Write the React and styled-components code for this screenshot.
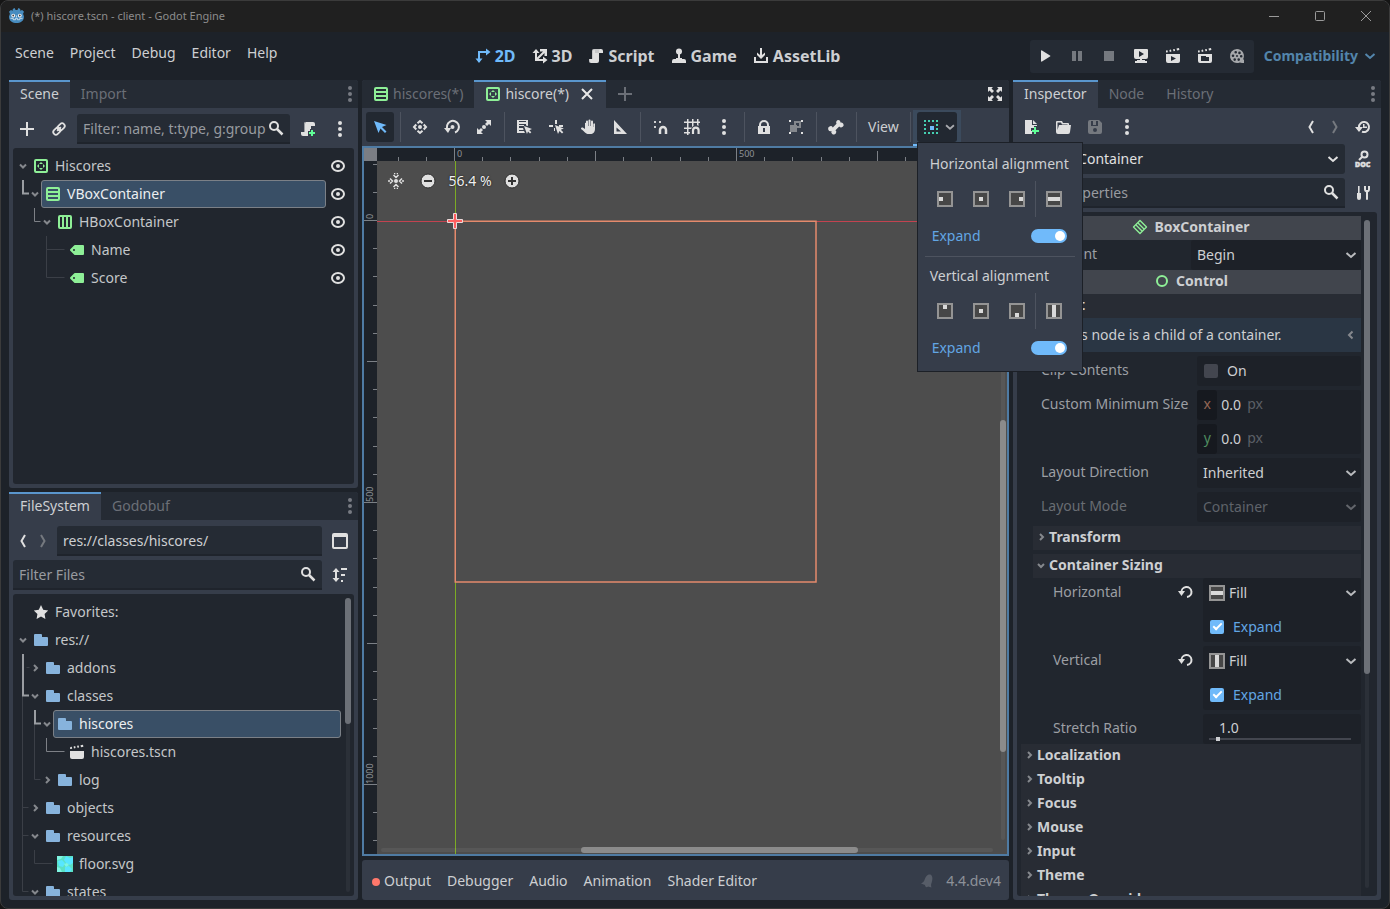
import React from 'react';
import styled, { createGlobalStyle, css } from 'styled-components';

const GlobalStyle = createGlobalStyle`
  *, *::before, *::after {
    box-sizing: border-box;
  }
  html, body, #root {
    height: 100%;
  }
  body {
    margin: 0;
    overflow: hidden;
    background: #151515;
    color: #cdcfd2;
    font: 14px/20px "Noto Sans", "Open Sans", sans-serif;
  }
  button, input, select {
    font: inherit;
    color: inherit;
    margin: 0;
  }
`;

/* ---------- icons ---------- */

const Svg = styled.svg`
  flex: none;
  display: block;
  fill: currentColor;
  overflow: visible;
`;

const box = 'M3 1a2 2 0 0 0-2 2v10a2 2 0 0 0 2 2h10a2 2 0 0 0 2-2V3a2 2 0 0 0-2-2z';
const line = { fill: 'none', stroke: 'currentColor', strokeWidth: 2 };

const icons = {
  dots: (
    <>
      <circle cx="8" cy="2" r="2" />
      <circle cx="8" cy="8" r="2" />
      <circle cx="8" cy="14" r="2" />
    </>
  ),
  add: <path d="M7 1h2v6h6v2H9v6H7V9H1V7h6z" />,
  link: (
    <g {...line} transform="rotate(-45 8 8)">
      <rect x="0" y="5" width="9" height="6" rx="3" />
      <rect x="7" y="5" width="9" height="6" rx="3" />
      <path d="M5 8h6" />
    </g>
  ),
  search: (
    <g {...line}>
      <circle cx="6" cy="6" r="4" />
      <path d="m9 9 5.500 5.500" strokeWidth="2.500" />
    </g>
  ),
  script: (
    <>
      <path d="M6 1a2 2 0 0 0-2 2v8H1v2a2 2 0 0 0 2 2h6a2 2 0 0 0 2-2V5h4V3a2 2 0 0 0-2-2z" />
      <path fill="#8b8e93" d="M6 1a2 2 0 0 0-2 2v8h1V3a1 1 0 0 1 2 0v2h4V3a2 2 0 0 1 1-1.700L12 1zM1 11v2a2 2 0 0 0 2 2 2 2 0 0 1-1-2v-2z" opacity=".3" />
    </>
  ),
  scriptAdd: (
    <>
      <path d="M6 1a2 2 0 0 0-2 2v8H1v2a2 2 0 0 0 2 2h5v-5h2V8h1V5h4V3a2 2 0 0 0-2-2z" />
      <path fill="#9b9ea2" d="M6 1a2 2 0 0 0-2 2v8h1V3a1 1 0 0 1 1-1z" />
      <path fill="#5fff97" d="M11 9h2v2h2v2h-2v2h-2v-2H9v-2h2z" />
    </>
  ),
  eye: (
    <>
      <ellipse cx="8" cy="8" rx="6" ry="5" {...line} />
      <circle cx="8" cy="8" r="2" />
    </>
  ),
  vbox: <path fillRule="evenodd" d={`${box}m0 2h10v2H3zm0 4h10v2H3zm0 4h10v2H3z`} />,
  hbox: <path fillRule="evenodd" d={`${box}m0 2h2v10H3zm4 0h2v10H7zm4 0h2v10h-2z`} />,
  center: (
    <>
      <path fillRule="evenodd" d={`${box}m0 2h10v10H3z`} />
      <path d="m8 4 2 2H6zM8 12l2-2H6zM4 8l2-2v4zM12 8l-2-2v4z" />
    </>
  ),
  label: (
    <path
      fillRule="evenodd"
      d="M6 3a1 1 0 0 0-.7.300l-4 4a1 1 0 0 0 0 1.400l4 4a1 1 0 0 0 .7.300h8a1 1 0 0 0 1-1V4a1 1 0 0 0-1-1zM5 7a1 1 0 0 1 0 2 1 1 0 0 1 0-2z"
    />
  ),
  back: <path d="M10 2 6.500 8l3.500 6" {...line} />,
  forward: <path d="m6 2 3.500 6L6 14" {...line} />,
  panel: <path fillRule="evenodd" d="M2 0a2 2 0 0 0-2 2v12a2 2 0 0 0 2 2h12a2 2 0 0 0 2-2V2a2 2 0 0 0-2-2zm0 4h12v10H2z" />,
  sort: (
    <>
      <path d="M4 1 .500 5H3v6H.500L4 15l3.500-4H5V5h2.500z" />
      <path d="M9 1h6v2H9zM9 7h4v2H9zM9 13h2v2H9z" />
    </>
  ),
  star: <path d="m8 1 2.200 4.700 5 .7-3.600 3.600.8 5L8 12.600 3.600 15l.8-5L.800 6.400l5-.7z" />,
  folder: <path d="M2 2a1 1 0 0 0-1 1v10a1 1 0 0 0 1 1h12a1 1 0 0 0 1-1V6a1 1 0 0 0-1-1H9V3a1 1 0 0 0-1-1z" />,
  clapper: (
    <>
      <path d="M1 7h14v6a2 2 0 0 1-2 2H3a2 2 0 0 1-2-2z" />
      <path d="m1 5 .300-2 1.500-.3.400 2zM5 4.400 4.600 2.400l1.600-.3.400 2zM8.500 3.700 8 1.800l1.700-.3.400 2zM12 3.200l-.5-2 2.500-.5.400 2z" />
    </>
  ),
  clapperPlay: (
    <>
      <path fillRule="evenodd" d="M1 6h14v7a2 2 0 0 1-2 2H3a2 2 0 0 1-2-2zm5 2v5l5-2.500z" />
      <path d="m1 4.500 0-2 1.500-.3.400 2zM4.800 3.900l-.4-2 1.600-.3.400 2zM8.500 3.200l-.5-2 1.700-.3.400 2zM12 2.600l-.5-2 2.500-.5.400 2z" />
    </>
  ),
  clapperFolder: (
    <>
      <path fillRule="evenodd" d="M1 6h14v7a2 2 0 0 1-2 2H3a2 2 0 0 1-2-2zm3 2v5h8V9H9V8z" />
      <path d="m1 4.500 0-2 1.500-.3.400 2zM4.800 3.900l-.4-2 1.600-.3.400 2zM8.500 3.200l-.5-2 1.700-.3.400 2zM12 2.600l-.5-2 2.500-.5.400 2z" />
    </>
  ),
  floor: (
    <>
      <path fill="#5be0c4" d="M0 0h16v16H0z" />
      <path fill="#58e6ff" d="m9 0 4 2 3-1v6l-3 2-4-2-2-3zM1 5l4-1 3 3-2 4-4-1zM8 11l4-1 3 3-2 3H8z" />
      <path fill="#7ff5e2" d="M0 0h6L4 3 0 4zM7 8l3-1 2 2-3 2zM0 11l3 1 2 4H0z" />
    </>
  ),
  mode2d: <path d="M5 5v5.500h2.500L4 15 .500 10.500H3V3h8V.500L15.500 4 11 7.500V5z" />,
  mode3d: <path d="M4 1 .500 5H3v8h8v2.500l4.500-3.500L11 8.500V11H6.500l6-6V8H15V1H8v2.500h3l-6 6V5h2.500z" />,
  game: (
    <>
      <circle cx="8" cy="3.500" r="3" />
      <path d="M7 5h2v5h2v1h2a2 2 0 0 1 2 2v2H1v-2a2 2 0 0 1 2-2h2v-1h2z" />
    </>
  ),
  asset: <path d="M7 0h2v7l3-2.500V7L8 11 4 7V4.500L7 7zM1 9h2v4h10V9h2v6H1z" />,
  play: <path d="M4 3v10a.7.7 0 0 0 1 .6l8-5a.7.7 0 0 0 0-1.200l-8-5A.7.7 0 0 0 4 3z" />,
  pause: <path d="M3 3h4v10H3zM9 3h4v10H9z" />,
  stop: <path d="M3 3h10v10H3z" />,
  remote: (
    <path fillRule="evenodd" d="M2 1a1 1 0 0 0-1 1v7a2 2 0 0 0 2 2h4v1H4v1H2v2h12v-2h-2v-1H9v-1h4a2 2 0 0 0 2-2V2a1 1 0 0 0-1-1zm4 2 5 3-5 3z" />
  ),
  movie: (
    <path
      fillRule="evenodd"
      d="M8 1a7 7 0 1 0 2.800 13.400L13 15h2v-3.500h-1A7 7 0 0 0 8 1zM6.700 3a1.300 1.300 0 1 1 0 2.600 1.300 1.300 0 0 1 0-2.600zm3.800.6a1.300 1.300 0 1 1 0 2.600 1.300 1.300 0 0 1 0-2.600zM4 6.500a1.300 1.300 0 1 1 0 2.600 1.300 1.300 0 0 1 0-2.600zm8.200.5a1.300 1.300 0 1 1 0 2.600 1.300 1.300 0 0 1 0-2.600zM8 7a1 1 0 1 1 0 2 1 1 0 0 1 0-2zm-2.300 3.300a1.300 1.300 0 1 1 0 2.600 1.300 1.300 0 0 1 0-2.600zm4 0a1.300 1.300 0 1 1 0 2.600 1.300 1.300 0 0 1 0-2.600z"
    />
  ),
  chevronDown: <path d="m3.500 6 4.500 4L12.500 6" {...line} />,
  chevronLeft: <path d="M10.500 4.500 7 8l3.500 3.500" {...line} />,
  close: <path d="m3 3 10 10M13 3 3 13" {...line} />,
  expand: (
    <path d="M1 1h5L4.500 2.500 7 5 5 7 2.500 4.500 1 6zM15 1v5l-1.500-1.500L11 7 9 5l2.500-2.500L10 1zM1 15v-5l1.500 1.500L5 9l2 2-2.500 2.500L6 15zM15 15h-5l1.500-1.500L9 11l2-2 2.500 2.500L15 10z" />
  ),
  select: <path d="m2 2 4.500 12 2-4.500L13 14l1.500-1.500L10 8l4.500-2z" />,
  move: (
    <>
      <circle cx="8" cy="8" r="2" />
      <path d="M5.500 4.300 8 2l2.500 2.300M5.500 11.700 8 14l2.500-2.300M4.300 5.500 2 8l2.300 2.500M11.700 5.500 14 8l-2.300 2.500" {...line} />
    </>
  ),
  rotate: (
    <>
      <path d="M3.800 11A6 6 0 1 1 11 13.500" {...line} />
      <path d="M0 9h7l-3 5z" />
      <circle cx="8.500" cy="8" r="2" />
    </>
  ),
  scale: (
    <>
      <circle cx="8" cy="8" r="2" />
      <path d="M9 1h6v6l-2-2-2 2-2-2 2-2zM7 15H1V9l2 2 2-2 2 2-2 2z" />
    </>
  ),
  listSelect: (
    <>
      <path fillRule="evenodd" d="M1 1h11v6l-2-.5V5H3v1h5v1H3v2h4l.6 2H3v1h5l1 2H1zm2 1v1h7V2z" />
      <path d="m8 7 3 8 1-2.500 2 2 1.300-1.300-2-2L16 10z" />
    </>
  ),
  pivot: (
    <>
      <path d="M7 1h2v4H7zM1 6h4v2H1zM7 9v3H6V9zM11 6h4v2h-4z" />
      <path d="m7 6 3 9 1.500-3 2.500 2.500 1.300-1.300-2.500-2.500 3-1.200z" />
    </>
  ),
  hand: (
    <path d="M6 2.500a1 1 0 0 1 2 0V7h.500V1.500a1 1 0 0 1 2 0V7h.500V2.500a1 1 0 0 1 2 0V8h.300V5a1 1 0 0 1 1.700 0v5c0 3-2 5-4.500 5h-2C6 15 5 13 1 10c0-1.500 1.500-1.700 2.500-1L5 10V4a1 1 0 0 1 1 0z" />
  ),
  ruler: <path fillRule="evenodd" d="M2 1v14h13zm2.500 7.500L9 12.500H4.500z" />,
  snap: (
    <>
      <path d="M2 2h2v2H2zM2 7h2v2H2zM7 2h2v2H7z" opacity=".9" />
      <path d="M8 15v-4a3 3 0 0 1 6 0v4" {...line} strokeWidth="2.500" />
    </>
  ),
  grid: (
    <>
      <path d="M3 0h1.500v2.500H8V0h1.500v2.500H13V0h1.500v2.500H16V4h-1.500v3L13 6V4H9.500v3L8 8V4H4.500v4.500H8L7 10H4.500v3H6v1.500H4.500V16H3v-1.500H0V13h3v-3H0V8.500h3V4H0V2.500h3z" />
      <path d="M9 15v-3.500a2.800 2.800 0 0 1 5.600 0V15" {...line} strokeWidth="2.200" />
    </>
  ),
  lock: <path fillRule="evenodd" d="M8 1a5 5 0 0 0-5 5v1H2v8h12V7h-1V6a5 5 0 0 0-5-5zm0 2a3 3 0 0 1 3 3v1H5V6a3 3 0 0 1 3-3zM7 9h2v4H7z" />,
  group: (
    <>
      <path fill="#85888d" fillRule="evenodd" d="M6 2h7v7H9v4H2V6h4zm2 2v2h1v1h2V4z" />
      <path d="M1 1h2v2H1zM13 1h2v2h-2zM1 13h2v2H1zM13 13h2v2h-2z" />
    </>
  ),
  bone: <path d="M10.500 1a2.500 2.500 0 0 0-2 3.800L4.800 8.500A2.500 2.500 0 1 0 3.500 12 2.500 2.500 0 1 0 7.500 11.200l3.700-3.700A2.500 2.500 0 1 0 12.500 3.500 2.500 2.500 0 0 0 10.500 1z" />,
  container: (
    <>
      <path fill="none" stroke="#45d0b1" strokeWidth="2" strokeDasharray="2 2" d="M1 2h14M1 14h14M2 1v14M14 1v14" />
      <path fill="#70bafa" d="M7 7h4v4H7z" />
    </>
  ),
  fileAdd: (
    <>
      <path d="M2 1v14h7v-3H8V9h3V7h3V6H9V1zM10 1v4h4z" />
      <path fill="#5fff97" d="M11 8h2v3h3v2h-3v2h-2v-2H9v-2h2z" />
    </>
  ),
  open: <path fillRule="evenodd" d="M2 2a1 1 0 0 0-1 1v10a2 2 0 0 0 2 2h10a2 2 0 0 0 2-2l1-7h-2V5a1 1 0 0 0-1-1H8L7 2zm.500 1.500H6l1 2h5.500V6H4L2.500 11z" />,
  save: <path fillRule="evenodd" d="M3 1a2 2 0 0 0-2 2v10a2 2 0 0 0 2 2h10a2 2 0 0 0 2-2V4l-3-3zm1 1h2v4h3V2h2v5H4zm4 7a2 2 0 1 1 0 4 2 2 0 0 1 0-4z" />,
  history: (
    <>
      <path d="M4 10V8a5 5 0 1 1 3 4.600" {...line} />
      <path d="M0 8h8l-4 5zM8 5h1.500v2.500H12V9H8z" />
    </>
  ),
  doc: (
    <>
      <circle cx="9.500" cy="3.500" r="3" {...line} />
      <path d="m7 6-3 3" {...line} />
      <text x="0" y="16" fontSize="7" fontWeight="900" fontFamily="Noto Sans, sans-serif" stroke="currentColor" strokeWidth=".5">
        DOC
      </text>
    </>
  ),
  tools: (
    <>
      <path d="M3 1h1.600v7H6v5a2 2 0 0 1-4 0V8h1z" />
      <path d="M9 1v3.500a3 3 0 0 0 2 2.800V14a1 1 0 0 0 2 0V7.300a3 3 0 0 0 2-2.800V1l-2 0v4h-2V1z" />
    </>
  ),
  boxContainer: (
    <g {...line} strokeWidth="1.400">
      <path d="M8 1.500 14.500 8 8 14.500 1.500 8z" strokeLinejoin="round" />
      <path d="m6 4 6 6M4 6l6 6" />
    </g>
  ),
  control: <circle cx="8" cy="8" r="5" {...line} />,
  revert: (
    <>
      <path d="M3.500 8.500A5 5 0 1 1 9 13" {...line} />
      <path d="M0 7h7l-3.500 5z" />
    </>
  ),
  recenter: (
    <>
      <circle cx="8" cy="8" r="2" />
      <path d="M5.500 2 8 4.500 10.500 2M5.500 14 8 11.500l2.500 2.500M2 5.500 4.500 8 2 10.500M14 5.500 11.500 8l2.500 2.500" {...line} strokeWidth="1.500" />
      <path d="M6 0h1.300v1.300H6zM8.700 0H10v1.300H8.700zM6 14.700h1.300V16H6zM8.700 14.700H10V16H8.700zM0 7.300h2v1.400H0zM14 7.300h2v1.400h-2z" />
    </>
  ),
  minus: (
    <>
      <circle cx="8" cy="8" r="7" stroke="#2d2d2d" />
      <path fill="#333" d="M4 7h8v2H4z" />
    </>
  ),
  plus: (
    <>
      <circle cx="8" cy="8" r="7" stroke="#2d2d2d" />
      <path fill="#333" d="M4 7h3V4h2v3h3v2H9v3H7V9H4z" />
    </>
  ),
  bell: <path d="M10.500 1.500C7 1 5.500 4 4.500 7 4 8.500 3 9.500 1 10.500l4 1.500c0 2 2 3 3 1.500l3.500 1c-.7-2-.5-3.500.2-5 1-3 1.300-6.500-1.200-8z" />,
  info: <path fillRule="evenodd" d="M8 1a7 7 0 1 0 0 14A7 7 0 0 0 8 1zM7 4h2v2H7zm0 3h2v5H7z" />,
  godot: (
    <>
      <path fill="#478cbf" d="m6 0 1 2h2l1-2 2 1v2l2-1 2 2-1 2 1 3c0 5-4 7-8 7s-8-2-8-7l1-3-1-2 2-2 2 1V1z" />
      <circle cx="4.500" cy="8" r="2" fill="#fff" />
      <circle cx="11.500" cy="8" r="2" fill="#fff" />
      <circle cx="4.500" cy="8" r="1" fill="#414042" />
      <circle cx="11.500" cy="8" r="1" fill="#414042" />
      <path fill="none" stroke="#fff" opacity=".7" d="M1.500 11h3v1.500H7V11h2v1.500h2.500V11h3M8 8v2" />
    </>
  ),
};

const Icon = ({ name, color, size = 16 }) => (
  <Svg width={size} height={size} viewBox="0 0 16 16" color={color} aria-hidden="true">
    {icons[name]}
  </Svg>
);

const marks = {
  left: [2, 6, 4, 4],
  middle: [6, 6, 4, 4],
  right: [10, 6, 4, 4],
  wide: [2, 6, 12, 4],
  top: [6, 2, 4, 4],
  bottom: [6, 10, 4, 4],
  tall: [6, 2, 4, 12],
};

const AlignIcon = ({ mark }) => {
  const [x, y, width, height] = marks[mark];
  return (
    <Svg width="16" height="16" viewBox="0 0 16 16" aria-hidden="true">
      <rect x="1" y="1" width="14" height="14" fill="#474747" stroke="#949494" strokeWidth="2" />
      <rect x={x} y={y} width={width} height={height} fill="#d9d9d9" />
    </Svg>
  );
};

/* ---------- window ---------- */

const Window = styled.div`
  height: 100vh;
  display: flex;
  flex-direction: column;
  border: 1px solid #3b3b3b;
  border-radius: 8px;
  overflow: hidden;
  background: #1d2229;
`;

const TitleBar = styled.div`
  display: flex;
  align-items: center;
  gap: 7px;
  height: 31px;
  padding: 0 0 2px 8px;
  flex: none;
  background: #202020;
  color: #8c8c8c;
  font-size: 11px;
`;

const WindowButtons = styled.div`
  display: flex;
  margin-left: auto;
`;

const WindowButton = styled.button`
  display: grid;
  place-items: center;
  width: 46px;
  height: 28px;
  padding: 0;
  border: 0;
  background: none;
  color: #9a9a9a;
`;

const Header = styled.header`
  display: flex;
  align-items: center;
  height: 48px;
  padding: 0 8px;
  flex: none;
`;

const Menu = styled.nav`
  display: flex;
  height: 42px;
  align-self: flex-start;
`;

const MenuButton = styled.button`
  padding: 0 8px;
  border: 0;
  background: none;

  &:first-child {
    padding-left: 6px;
  }
`;

const Modes = styled.div`
  display: flex;
  margin: 0 auto;
`;

const ModeButton = styled.button`
  display: flex;
  align-items: center;
  gap: 4px;
  padding: 0 8px;
  border: 0;
  background: none;
  font-size: 16px;
  font-weight: 700;
  color: ${({ $active }) => ($active ? '#70bafa' : '#cdcfd2')};

  svg {
    color: ${({ $active }) => ($active ? '#70bafa' : '#e0e0e0')};
  }
`;

const RunBar = styled.div`
  display: flex;
  align-items: center;
  gap: 4px;
  height: 33px;
  padding: 0 3px 0 1px;
  border-radius: 3px;
  background: #252b34;
`;

const IconButton = styled.button`
  display: grid;
  place-items: center;
  flex: none;
  width: ${({ $narrow }) => ($narrow ? 20 : 28)}px;
  height: 30px;
  padding: 0;
  border: 0;
  border-radius: 3px;
  background: ${({ $pressed }) => ($pressed ? '#222831' : 'none')};
  color: ${({ $pressed }) => ($pressed ? '#70bafa' : '#e0e0e0')};

  &:disabled {
    color: #75797f;
  }
`;

const Renderer = styled.button`
  display: flex;
  align-items: center;
  gap: 4px;
  padding: 0 3px 0 10px;
  border: 0;
  background: none;
  color: #5385ab;
  font-weight: 700;
`;

const Workspace = styled.main`
  flex: 1;
  min-height: 0;
  display: grid;
  grid-template-columns: 349px minmax(0, 1fr) 368px;
  gap: 4px;
  padding: 0 8px 8px;
`;

const Column = styled.div`
  display: grid;
  grid-template-rows: ${({ $rows }) => $rows};
  gap: 4px;
  min-height: 0;
  min-width: 0;
`;

/* ---------- docks ---------- */

const Dock = styled.section`
  display: flex;
  flex-direction: column;
  min-height: 0;
  min-width: 0;
  border-radius: 3px;
  background: #363d4a;
`;

const Tabs = styled.div`
  display: flex;
  height: 28px;
  flex: none;
  border-radius: 3px 3px 0 0;
  background: #252b34;
`;

const Tab = styled.button`
  display: flex;
  align-items: center;
  gap: 4px;
  padding: 0 11px;
  border: 0;
  border-top: 2px solid transparent;
  border-bottom: 2px solid transparent;
  background: none;
  color: #6b6f77;

  ${({ $active }) =>
    $active &&
    css`
      border-top-color: #5a96cd;
      background: #363d4a;
      color: #cdcfd2;
    `}
`;

const TabClose = styled.span`
  margin-left: 6px;
  color: #e8e8e8;
`;

const TabsEnd = styled.div`
  display: flex;
  align-items: center;
  margin-left: auto;
`;

const TabDots = styled.button`
  display: grid;
  place-items: center;
  width: 16px;
  height: 28px;
  margin-left: auto;
  padding: 0;
  border: 0;
  background: none;
  color: #787b82;
`;

const DockBody = styled.div`
  flex: 1;
  min-height: 0;
  display: flex;
  flex-direction: column;
  gap: 4px;
  padding: 6px 4px 4px;
`;

const Bar = styled.div`
  display: flex;
  align-items: center;
  gap: ${({ $gap = 4 }) => $gap}px;
  height: ${({ $short }) => ($short ? 26 : 30)}px;
  flex: none;
`;

const Field = styled.label`
  display: flex;
  align-items: center;
  gap: 1px;
  flex: 1;
  min-width: 0;
  height: 30px;
  padding: 0 6px;
  border-radius: 3px 3px 0 0;
  border-bottom: 2px solid #1f242c;
  background: #252b34;
  color: #e0e0e0;
`;

const OptionField = styled(Field)`
  gap: 6px;
  padding-right: 4px;
  border-radius: 3px;
  border-bottom: 0;
`;

const TextInput = styled.input`
  flex: 1;
  min-width: 0;
  width: 0;
  height: 26px;
  padding: 0;
  border: 0;
  outline: 0;
  background: none;
  color: #cdcfd2;

  &::placeholder {
    color: #989ba0;
    opacity: 1;
  }
`;

const Spacer = styled.span`
  flex: 1;
`;

/* ---------- trees ---------- */

const TreeBox = styled.div`
  position: relative;
  flex: 1;
  min-height: 0;
  padding: 4px ${({ $scroll }) => ($scroll ? 13 : 4)}px 0 4px;
  border-radius: 3px;
  overflow: hidden;
  background: #21262e;
`;

const TreeRow = styled.div`
  display: flex;
  height: 28px;
`;

const Cell = styled.div`
  display: flex;
  align-items: center;
  gap: 6px;
  flex: 1;
  min-width: 0;
  padding-left: ${({ $selected }) => ($selected ? 3 : 4)}px;
  border-radius: 3px;
  color: #c4c6c9;

  ${({ $selected }) =>
    $selected &&
    css`
      border: 1px solid #7b8087;
      background: #394f66;
      color: #eceef0;
    `}
`;

const EyeButton = styled(IconButton)`
  width: 24px;
  height: 28px;
`;

const ScrollTrack = styled.div`
  position: absolute;
  z-index: 1;
  border-radius: 3px;
  background: ${({ $light }) => ($light ? 'rgba(255, 255, 255, 0.06)' : '#2b3038')};

  ${({ $horizontal, $light }) =>
    $horizontal
      ? css`
          left: 4px;
          right: 14px;
          bottom: 2px;
          height: 4px;
        `
      : css`
          top: 4px;
          right: ${$light ? 2 : 4}px;
          bottom: ${$light ? 14 : 4}px;
          width: 4px;
        `}
`;

const ScrollThumb = styled.div`
  position: absolute;
  border-radius: 3px;
  background: ${({ $light }) => ($light ? '#8b8b8b' : '#6c7077')};
  ${({ $horizontal }) => ($horizontal ? 'top: -1px; height: 6px;' : 'left: -1px; width: 6px;')}
`;

const tones = { hot: '#9a9da2', warm: '#7d8086', dim: '#3b3f47' };

const Guides = ({ level, arrow, guides = [] }) => {
  const width = 12 * (level + 1);
  return (
    <Svg width={width} height="28" viewBox={`0 0 ${width} 28`} aria-hidden="true">
      {guides.map(([at, kind, tone]) => {
        const x = 12 * at + (tone === 'hot' ? 6 : 5.5);
        const reach = arrow ? 6 : 18;
        const stroke = tones[tone];
        const strokeWidth = tone === 'hot' ? 2 : 1;
        return (
          <g key={`${at}${kind}${tone}`} fill="none" stroke={stroke} strokeWidth={strokeWidth}>
            {kind === 'full' && <path d={`M${x} 0v28`} />}
            {kind === 'end' && <path d={`M${x} 0v13.500h${reach}`} />}
            {kind === 'tee' && <path d={`M${x} 0v28M${x} 13.500h${reach}`} />}
            {kind === 'below' && <path d={`M${x} 14v14`} />}
            {kind === 'tick' && <path d={`M${x + 4} 13.500h3`} />}
          </g>
        );
      })}
      {arrow === 'open' && <path d={`M${width - 9} 12.500l3 3 3-3`} fill="none" stroke="#85888d" strokeWidth="2" />}
      {arrow === 'shut' && <path d={`M${width - 7} 11l3 3-3 3`} fill="none" stroke="#85888d" strokeWidth="2" />}
    </Svg>
  );
};

const Tree = ({ rows, eyes, children }) => (
  <TreeBox $scroll={!eyes}>
    {rows.map((row) => (
      <TreeRow key={row.name}>
        <Guides level={row.level} arrow={row.arrow} guides={row.guides} />
        <Cell $selected={row.selected}>
          <Icon name={row.icon} color={row.color} />
          {row.name}
        </Cell>
        {eyes && (
          <EyeButton aria-label={`Toggle ${row.name}`}>
            <Icon name="eye" />
          </EyeButton>
        )}
      </TreeRow>
    ))}
    {children}
  </TreeBox>
);

const GREEN = '#8eef97';
const BLUE = '#87b3dc';

const sceneRows = [
  { name: 'Hiscores', level: 0, arrow: 'open', icon: 'center', color: GREEN },
  { name: 'VBoxContainer', level: 1, arrow: 'open', icon: 'vbox', color: GREEN, selected: true, guides: [[0, 'end', 'hot']] },
  { name: 'HBoxContainer', level: 2, arrow: 'open', icon: 'hbox', color: GREEN, guides: [[1, 'end', 'warm']] },
  { name: 'Name', level: 3, icon: 'label', color: GREEN, guides: [[2, 'tee', 'dim']] },
  { name: 'Score', level: 3, icon: 'label', color: GREEN, guides: [[2, 'end', 'dim']] },
];

const fileRows = [
  { name: 'Favorites:', level: 0, icon: 'star', color: '#e0e0e0' },
  { name: 'res://', level: 0, arrow: 'open', icon: 'folder', color: BLUE },
  { name: 'addons', level: 1, arrow: 'shut', icon: 'folder', color: BLUE, guides: [[0, 'tick', 'dim'], [0, 'full', 'hot']] },
  { name: 'classes', level: 1, arrow: 'open', icon: 'folder', color: BLUE, guides: [[0, 'below', 'dim'], [0, 'end', 'hot']] },
  { name: 'hiscores', level: 2, arrow: 'open', icon: 'folder', color: BLUE, selected: true, guides: [[0, 'full', 'dim'], [1, 'below', 'dim'], [1, 'end', 'hot']] },
  { name: 'hiscores.tscn', level: 3, icon: 'clapper', color: '#e0e0e0', guides: [[0, 'full', 'dim'], [1, 'full', 'dim'], [2, 'end', 'warm']] },
  { name: 'log', level: 2, arrow: 'shut', icon: 'folder', color: BLUE, guides: [[0, 'full', 'dim'], [1, 'end', 'dim']] },
  { name: 'objects', level: 1, arrow: 'shut', icon: 'folder', color: BLUE, guides: [[0, 'tee', 'dim']] },
  { name: 'resources', level: 1, arrow: 'open', icon: 'folder', color: BLUE, guides: [[0, 'tee', 'dim']] },
  { name: 'floor.svg', level: 2, icon: 'floor', guides: [[0, 'full', 'dim'], [1, 'end', 'dim']] },
  { name: 'states', level: 1, arrow: 'open', icon: 'folder', color: BLUE, guides: [[0, 'end', 'dim']] },
];

const SceneDock = () => (
  <Dock>
    <Tabs>
      <Tab $active>Scene</Tab>
      <Tab>Import</Tab>
      <TabDots aria-label="Dock options">
        <Icon name="dots" />
      </TabDots>
    </Tabs>
    <DockBody>
      <Bar>
        <IconButton aria-label="Add node">
          <Icon name="add" />
        </IconButton>
        <IconButton aria-label="Instantiate scene">
          <Icon name="link" size={14} />
        </IconButton>
        <Field>
          <TextInput aria-label="Filter nodes" placeholder="Filter: name, t:type, g:group" />
          <Icon name="search" />
        </Field>
        <IconButton aria-label="Attach script">
          <Icon name="scriptAdd" />
        </IconButton>
        <IconButton aria-label="Scene options">
          <Icon name="dots" />
        </IconButton>
      </Bar>
      <Tree rows={sceneRows} eyes />
    </DockBody>
  </Dock>
);

const FileDock = () => (
  <Dock>
    <Tabs>
      <Tab $active>FileSystem</Tab>
      <Tab>Godobuf</Tab>
      <TabDots aria-label="Dock options">
        <Icon name="dots" />
      </TabDots>
    </Tabs>
    <DockBody>
      <Bar>
        <Bar $gap={0}>
          <IconButton $narrow aria-label="Back">
            <Icon name="back" />
          </IconButton>
          <IconButton $narrow disabled aria-label="Forward">
            <Icon name="forward" />
          </IconButton>
        </Bar>
        <Field>
          <TextInput aria-label="Path" defaultValue="res://classes/hiscores/" />
        </Field>
        <IconButton aria-label="Split mode">
          <Icon name="panel" />
        </IconButton>
      </Bar>
      <Bar>
        <Field>
          <TextInput aria-label="Filter files" placeholder="Filter Files" />
          <Icon name="search" />
        </Field>
        <IconButton aria-label="Sort files">
          <Icon name="sort" />
        </IconButton>
      </Bar>
      <Tree rows={fileRows}>
        <ScrollTrack>
          <ScrollThumb style={{ top: 0, height: '43%' }} />
        </ScrollTrack>
      </Tree>
    </DockBody>
  </Dock>
);

/* ---------- 2D editor ---------- */

const Toolbar = styled.div`
  display: flex;
  align-items: center;
  gap: 4px;
  padding: 4px;
  flex: none;
`;

const Divider = styled.span`
  width: 4px;
  height: 30px;
  display: flex;
  justify-content: center;

  &::before {
    content: '';
    width: 1px;
    background: #4d535f;
  }
`;

const TextButton = styled.button`
  padding: 0 6px;
  border: 0;
  background: none;
`;

const Context = styled.div`
  position: relative;
  z-index: 5;
  height: 36px;
  margin: -2px -4px -4px;
  padding: 2px 4px 2px;
  border-bottom: 2px solid #70bafa;
  background: #3b4a5c;
`;

const ContextButton = styled.button`
  display: flex;
  align-items: center;
  gap: 4px;
  width: 40px;
  height: 30px;
  padding: 0 0 0 6px;
  border: 0;
  border-radius: 3px;
  background: #222831;
  color: #a9abaf;
`;

const Popup = styled.div`
  position: absolute;
  top: 32px;
  left: 4px;
  width: 166px;
  padding: 11px 7px 8px;
  border: 1px solid #1c2027;
  background: #363d4a;
`;

const PopupTitle = styled.div`
  padding-left: 5px;
  white-space: nowrap;
  margin-bottom: 7px;
`;

const AlignRow = styled.div`
  display: flex;
  align-items: center;
  margin-bottom: 4px;
  padding-left: 2px;
`;

const AlignButton = styled.button`
  display: grid;
  place-items: center;
  width: 36px;
  height: 36px;
  padding: 0;
  border: 0;
  background: none;

  &:last-child {
    border-left: 1px solid #4d535f;
    width: 37px;
  }
`;

const ToggleRow = styled.label`
  display: flex;
  align-items: center;
  justify-content: space-between;
  height: 30px;
  padding: 0 8px 0 7px;
  color: #62a6e4;
`;

const Switch = styled.input`
  appearance: none;
  position: relative;
  width: 36px;
  height: 14px;
  border-radius: 7px;
  background: #70bafa;

  &::after {
    content: '';
    position: absolute;
    top: 2px;
    right: 2px;
    width: 10px;
    height: 10px;
    border-radius: 50%;
    background: #fff;
  }
`;

const PopupRule = styled.div`
  height: 1px;
  margin: 5px 0 9px;
  background: #4d535f;
`;

const View = styled.div`
  flex: 1;
  min-height: 0;
  display: grid;
  grid-template-columns: 13px minmax(0, 1fr);
  grid-template-rows: 13px minmax(0, 1fr);
  border: 2px solid #4f7ba3;
`;

const Corner = styled.div`
  background: #7b7e84;
`;

const Ruler = styled.svg`
  display: block;
  width: 100%;
  height: 100%;
  background: #1d2229;
  stroke: #7c8086;

  text {
    stroke: none;
    fill: #8f9297;
    font-size: 9px;
  }
`;

const Canvas = styled.div`
  position: relative;
  overflow: hidden;
  background: #4d4d4d;
`;

const Drawing = styled.svg`
  display: block;
  width: 100%;
  height: 100%;
`;

const ZoomBar = styled.div`
  position: absolute;
  top: 5px;
  left: 5px;
  display: flex;
  align-items: center;
  color: #f0f0f0;
  text-shadow: 0 0 2px #222, 0 0 1px #222;
`;

const ZoomLabel = styled.button`
  width: 56px;
  padding: 0;
  border: 0;
  background: none;
  text-shadow: inherit;
`;

const ZoomButton = styled(IconButton)`
  &:first-child {
    margin-right: 4px;
  }
`;

const STEP = 28.2;
const ticks = Array.from({ length: 40 }, (_, i) => i - 2);

const tickSize = (i) => {
  if (i % 10 === 0) return 13;
  return i % 5 === 0 ? 10 : 4;
};

const Viewport = () => (
  <View>
    <Corner />
    <Ruler>
      {ticks.map((i) => {
        const x = Math.round(78 + i * STEP) - 0.5;
        return <path key={i} d={`M${x} 13v-${tickSize(i)}`} />;
      })}
      <text x="80" y="9">0</text>
      <text x="362" y="9">500</text>
    </Ruler>
    <Ruler>
      {ticks.map((i) => {
        const y = Math.round(60 + i * STEP) - 0.5;
        return <path key={i} d={`M13 ${y}h-${tickSize(i)}`} />;
      })}
      <text transform="translate(9 58) rotate(-90)">0</text>
      <text transform="translate(9 341) rotate(-90)">500</text>
      <text transform="translate(9 623) rotate(-90)">1000</text>
    </Ruler>
    <Canvas>
      <Drawing>
        <path d="M0 60.500h2000" stroke="#c24350" />
        <path d="M78.500 0v2000" stroke="#7cab24" />
        <rect x="78.250" y="60.250" width="360.750" height="360.750" fill="none" stroke="#e58a6c" strokeWidth="1.500" />
        <path d="M76.500 52.500h3v6h6v3h-6v6h-3v-6h-6v-3h6z" fill="#ff5f5f" stroke="#eadada" />
      </Drawing>
      <ZoomBar>
        <ZoomButton aria-label="Center view">
          <Icon name="recenter" />
        </ZoomButton>
        <ZoomButton aria-label="Zoom out">
          <Icon name="minus" />
        </ZoomButton>
        <ZoomLabel>56.4 %</ZoomLabel>
        <ZoomButton aria-label="Zoom in">
          <Icon name="plus" />
        </ZoomButton>
      </ZoomBar>
      <ScrollTrack $light $horizontal>
        <ScrollThumb $light $horizontal style={{ left: '32.6%', width: '45.4%' }} />
      </ScrollTrack>
      <ScrollTrack $light>
        <ScrollThumb $light style={{ top: '37.8%', height: '49.2%' }} />
      </ScrollTrack>
    </Canvas>
  </View>
);

const AlignGroup = ({ title, options }) => (
  <>
    <PopupTitle>{title}</PopupTitle>
    <AlignRow>
      {options.map((mark) => (
        <AlignButton key={mark} aria-label={mark}>
          <AlignIcon mark={mark} />
        </AlignButton>
      ))}
    </AlignRow>
    <ToggleRow>
      Expand
      <Switch type="checkbox" role="switch" defaultChecked />
    </ToggleRow>
  </>
);

const toolGroups = [
  ['select'],
  ['move', 'rotate', 'scale'],
  ['listSelect', 'pivot', 'hand', 'ruler'],
  ['snap', 'grid', 'dots'],
  ['lock', 'group'],
  ['bone'],
];

const Editor = () => (
  <Dock>
    <Tabs>
      <Tab>
        <Icon name="vbox" color={GREEN} />
        hiscores(*)
      </Tab>
      <Tab $active>
        <Icon name="center" color={GREEN} />
        hiscore(*)
        <TabClose>
          <Icon name="close" />
        </TabClose>
      </Tab>
      <Tab aria-label="Add scene">
        <Icon name="add" />
      </Tab>
      <TabsEnd>
        <IconButton aria-label="Distraction free mode">
          <Icon name="expand" />
        </IconButton>
      </TabsEnd>
    </Tabs>
    <Toolbar>
      {toolGroups.map((group) => (
        <React.Fragment key={group[0]}>
          {group.map((name) => (
            <IconButton key={name} aria-label={name} $pressed={name === 'select'}>
              <Icon name={name} />
            </IconButton>
          ))}
          <Divider />
        </React.Fragment>
      ))}
      <TextButton>View</TextButton>
      <Divider />
      <Context>
        <ContextButton aria-label="Container sizing">
          <Icon name="container" />
          <Icon name="chevronDown" size={14} />
        </ContextButton>
        <Popup>
          <AlignGroup title="Horizontal alignment" options={['left', 'middle', 'right', 'wide']} />
          <PopupRule />
          <AlignGroup title="Vertical alignment" options={['top', 'middle', 'bottom', 'tall']} />
        </Popup>
      </Context>
    </Toolbar>
    <Viewport />
  </Dock>
);

const BottomPanel = styled.div`
  display: flex;
  align-items: center;
  gap: 4px;
  height: 40px;
  padding: 2px 8px 0 4px;
  border-radius: 3px;
  background: #363d4a;
`;

const OutputDot = styled.span`
  display: inline-block;
  width: 8px;
  height: 8px;
  margin-right: 4px;
  border-radius: 50%;
  background: #ff786b;
`;

const Version = styled.span`
  margin-left: 6px;
  color: #8d9199;
`;

/* ---------- inspector ---------- */

const InspectorBox = styled.div`
  position: relative;
  flex: 1;
  min-height: 0;
  padding: 4px 16px 0 4px;
  border-radius: 3px;
  overflow: hidden;
  background: #21262e;
`;

const Category = styled.h2`
  display: flex;
  align-items: center;
  justify-content: center;
  gap: 6px;
  height: 24px;
  margin: 0;
  padding-bottom: 2px;
  background: #41454d;
  font-size: 14px;
  font-weight: 700;
`;

const SectionHead = styled.button`
  display: flex;
  align-items: center;
  gap: 3px;
  width: 100%;
  height: 24px;
  padding: 0 0 2px 3px;
  border: 0;
  background: #282c34;
  font-weight: 700;
  text-align: left;
  white-space: nowrap;
`;

const SectionBody = styled.div`
  display: flex;
  flex-direction: column;
  gap: 4px;
  padding-left: 12px;
`;

const Notice = styled.div`
  display: flex;
  align-items: center;
  gap: 6px;
  height: 34px;
  padding: 0 3px 0 6px;
  background: #2a3644;
  white-space: nowrap;

  svg:last-child {
    margin-left: auto;
    color: #85888d;
  }
`;

const Property = styled.div`
  display: grid;
  grid-template-columns: 1fr 1fr;
  color: ${({ $dim }) => ($dim ? '#696d73' : '#9c9fa4')};
`;

const PropertyName = styled.label`
  display: flex;
  align-items: center;
  justify-content: space-between;
  height: 28px;
  padding: 0 9px 0 8px;
  white-space: nowrap;

  svg {
    color: #e0e0e0;
  }
`;

const Value = styled.div`
  display: flex;
  flex-direction: column;
  gap: 4px;
  border-radius: 3px;
  background: #1d2128;
  color: ${({ $dim }) => ($dim ? '#5f636a' : '#cdcfd2')};
`;

const Line = styled.label`
  display: flex;
  align-items: center;
  gap: 4px;
  height: 30px;
  padding: 0 2px 0 6px;
  color: ${({ $accent }) => ($accent ? '#62a6e4' : 'inherit')};
`;

const Select = styled.select`
  appearance: none;
  flex: 1;
  min-width: 0;
  height: 26px;
  padding: 0;
  border: 0;
  outline: 0;
  background: none;
  opacity: 1;
`;

const Check = styled.input`
  appearance: none;
  display: grid;
  place-items: center;
  width: 14px;
  height: 14px;
  margin: 0 5px 0 1px;
  border-radius: 2px;
  background: #43464f;

  &:checked {
    background: #70bafa;
  }

  &:checked::before {
    content: '';
    width: 9px;
    height: 5px;
    border: solid #fff;
    border-width: 0 0 2px 2px;
    transform: rotate(-45deg);
    margin-bottom: 3px;
  }
`;

const Axis = styled.span`
  width: 20px;
  height: 30px;
  line-height: 28px;
  border-radius: 3px;
  text-align: center;
  background: #16191f;
  color: ${({ $color }) => $color};
`;

const NumberLine = styled(Line)`
  padding: 0;
`;

const NumberInput = styled.input`
  width: ${({ $wide }) => ($wide ? 100 : 22)}px;
  height: 26px;
  padding: 0 0 2px;
  border: 0;
  outline: 0;
  background: none;
`;

const Unit = styled.span`
  padding-bottom: 2px;
  color: #5b5f66;
`;

const RatioValue = styled(Value)`
  height: 30px;
  gap: 0;
  padding: 0 10px 0 6px;

  ${NumberInput} {
    height: 22px;
    margin: 2px 0 0 10px;
    padding: 0;
  }
`;

const Slider = styled.input`
  appearance: none;
  width: 100%;
  height: 4px;
  margin: -1px 0 0;
  background: linear-gradient(#43464f, #43464f) center / 100% 2px no-repeat;

  &::-webkit-slider-thumb {
    appearance: none;
    width: 4px;
    height: 4px;
    background: #cdcfd2;
  }
`;

const SectionArrow = ({ open }) => (
  <Svg width="10" height="10" viewBox="0 0 10 10" aria-hidden="true">
    <path d={open ? 'M2 4l3 3 3-3' : 'M4 2l3 3-3 3'} fill="none" stroke="#85888d" strokeWidth="2" />
  </Svg>
);

const Section = ({ title, open, children }) => (
  <div>
    <SectionHead>
      <SectionArrow open={open} />
      {title}
    </SectionHead>
    {open && <SectionBody>{children}</SectionBody>}
  </div>
);

const SelectProperty = ({ name, value, disabled }) => (
  <Property $dim={disabled}>
    <PropertyName htmlFor={name}>{name}</PropertyName>
    <Value $dim={disabled}>
      <Line>
        <Select id={name} disabled={disabled}>
          <option>{value}</option>
        </Select>
        <Icon name="chevronDown" color={disabled ? '#63666c' : '#b9bbbe'} />
      </Line>
    </Value>
  </Property>
);

const SizingProperty = ({ name, mark }) => (
  <Property>
    <PropertyName htmlFor={name}>
      {name}
      <Icon name="revert" />
    </PropertyName>
    <Value>
      <Line>
        <AlignIcon mark={mark} />
        <Select id={name}>
          <option>Fill</option>
        </Select>
        <Icon name="chevronDown" color="#b9bbbe" />
      </Line>
      <Line $accent>
        <Check type="checkbox" defaultChecked />
        Expand
      </Line>
    </Value>
  </Property>
);

const InspectorTrack = styled(ScrollTrack)`
  right: 8px;
  top: 8px;
  bottom: 8px;
`;

const closedSections = ['Localization', 'Tooltip', 'Focus', 'Mouse', 'Input', 'Theme', 'Theme Overrides'];

const Inspector = () => (
  <Dock>
    <Tabs>
      <Tab $active>Inspector</Tab>
      <Tab>Node</Tab>
      <Tab>History</Tab>
      <TabDots aria-label="Dock options">
        <Icon name="dots" />
      </TabDots>
    </Tabs>
    <DockBody>
      <Bar $short>
        <IconButton aria-label="New resource">
          <Icon name="fileAdd" />
        </IconButton>
        <IconButton aria-label="Load resource">
          <Icon name="open" />
        </IconButton>
        <IconButton disabled aria-label="Save resource">
          <Icon name="save" />
        </IconButton>
        <IconButton aria-label="Resource options">
          <Icon name="dots" />
        </IconButton>
        <Spacer />
        <IconButton $narrow aria-label="Previous object">
          <Icon name="back" />
        </IconButton>
        <IconButton $narrow disabled aria-label="Next object">
          <Icon name="forward" />
        </IconButton>
        <IconButton aria-label="Object history">
          <Icon name="history" />
        </IconButton>
      </Bar>
      <Bar>
        <OptionField>
          <Icon name="vbox" color={GREEN} />
          <Select aria-label="Object">
            <option>VBoxContainer</option>
          </Select>
          <Icon name="chevronDown" />
        </OptionField>
        <IconButton aria-label="Open documentation">
          <Icon name="doc" />
        </IconButton>
      </Bar>
      <Bar>
        <Field>
          <TextInput aria-label="Filter properties" placeholder="Filter Properties" />
          <Icon name="search" />
        </Field>
        <IconButton aria-label="Manage properties">
          <Icon name="tools" />
        </IconButton>
      </Bar>
      <InspectorBox>
        <Category>
          <Icon name="boxContainer" color={GREEN} />
          BoxContainer
        </Category>
        <SelectProperty name="Alignment" value="Begin" />
        <Category>
          <Icon name="control" color={GREEN} />
          Control
        </Category>
        <Section title="Layout" open>
          <Notice>
            <Icon name="info" color="#70bafa" />
            This node is a child of a container.
            <Icon name="chevronLeft" />
          </Notice>
          <Property>
            <PropertyName htmlFor="clip">Clip Contents</PropertyName>
            <Value>
              <Line>
                <Check id="clip" type="checkbox" />
                On
              </Line>
            </Value>
          </Property>
          <Property>
            <PropertyName htmlFor="min-x">Custom Minimum Size</PropertyName>
            <Value>
              <NumberLine>
                <Axis $color="#946655">x</Axis>
                <NumberInput id="min-x" defaultValue="0.0" />
                <Unit>px</Unit>
              </NumberLine>
              <NumberLine>
                <Axis $color="#4f8c5f">y</Axis>
                <NumberInput defaultValue="0.0" />
                <Unit>px</Unit>
              </NumberLine>
            </Value>
          </Property>
          <SelectProperty name="Layout Direction" value="Inherited" />
          <SelectProperty name="Layout Mode" value="Container" disabled />
          <Section title="Transform" />
          <Section title="Container Sizing" open>
            <SizingProperty name="Horizontal" mark="wide" />
            <SizingProperty name="Vertical" mark="tall" />
            <Property>
              <PropertyName htmlFor="ratio">Stretch Ratio</PropertyName>
              <RatioValue>
                <NumberInput id="ratio" $wide defaultValue="1.0" />
                <Slider type="range" aria-label="Stretch Ratio" min="0" max="20" defaultValue="1" />
              </RatioValue>
            </Property>
          </Section>
        </Section>
        {closedSections.map((title) => (
          <Section key={title} title={title} />
        ))}
        <InspectorTrack>
          <ScrollThumb style={{ top: 0, height: '68%' }} />
        </InspectorTrack>
      </InspectorBox>
    </DockBody>
  </Dock>
);

/* ---------- app ---------- */

const runButtons = ['play', 'pause', 'stop', 'remote', 'clapperPlay', 'clapperFolder', 'movie'];

const App = () => (
  <Window>
    <GlobalStyle />
    <TitleBar>
      <Icon name="godot" size={15} />
      (*) hiscore.tscn - client - Godot Engine
      <WindowButtons>
        <WindowButton aria-label="Minimize">
          <Svg width="10" height="10">
            <path d="M0 5.500h10" stroke="currentColor" />
          </Svg>
        </WindowButton>
        <WindowButton aria-label="Maximize">
          <Svg width="10" height="10">
            <rect x="0.500" y="0.500" width="9" height="9" rx="1" fill="none" stroke="currentColor" />
          </Svg>
        </WindowButton>
        <WindowButton aria-label="Close">
          <Svg width="10" height="10">
            <path d="m0 0 10 10M10 0 0 10" stroke="currentColor" />
          </Svg>
        </WindowButton>
      </WindowButtons>
    </TitleBar>
    <Header>
      <Menu>
        {['Scene', 'Project', 'Debug', 'Editor', 'Help'].map((item) => (
          <MenuButton key={item}>{item}</MenuButton>
        ))}
      </Menu>
      <Modes>
        <ModeButton $active>
          <Icon name="mode2d" />
          2D
        </ModeButton>
        <ModeButton>
          <Icon name="mode3d" />
          3D
        </ModeButton>
        <ModeButton>
          <Icon name="script" />
          Script
        </ModeButton>
        <ModeButton>
          <Icon name="game" />
          Game
        </ModeButton>
        <ModeButton>
          <Icon name="asset" />
          AssetLib
        </ModeButton>
      </Modes>
      <RunBar>
        {runButtons.map((name) => (
          <IconButton key={name} aria-label={name} disabled={name === 'pause' || name === 'stop'}>
            <Icon name={name} color={name === 'movie' ? '#a6a8ab' : undefined} />
          </IconButton>
        ))}
      </RunBar>
      <Renderer>
        Compatibility
        <Icon name="chevronDown" />
      </Renderer>
    </Header>
    <Workspace>
      <Column $rows="minmax(0, 1fr) minmax(0, 1fr)">
        <SceneDock />
        <FileDock />
      </Column>
      <Column $rows="minmax(0, 1fr) auto">
        <Editor />
        <BottomPanel>
          <TextButton>
            <OutputDot />
            Output
          </TextButton>
          {['Debugger', 'Audio', 'Animation', 'Shader Editor'].map((item) => (
            <TextButton key={item}>{item}</TextButton>
          ))}
          <Spacer />
          <Icon name="bell" color="#575d68" />
          <Version>4.4.dev4</Version>
        </BottomPanel>
      </Column>
      <Column $rows="minmax(0, 1fr)">
        <Inspector />
      </Column>
    </Workspace>
  </Window>
);

export default App;
